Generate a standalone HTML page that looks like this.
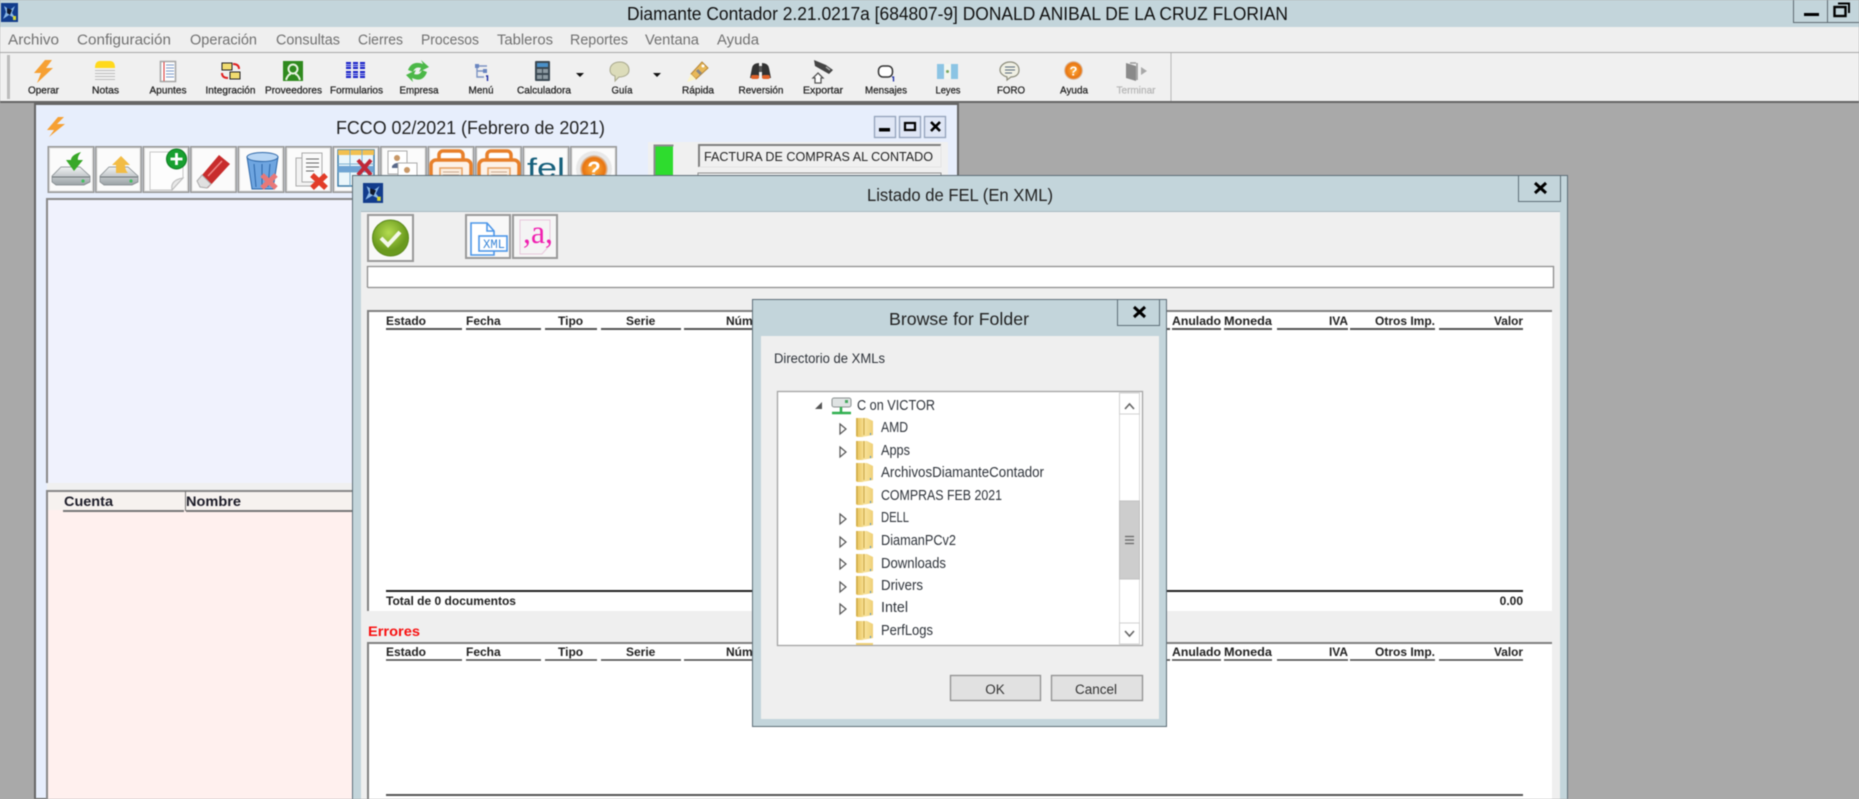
<!DOCTYPE html>
<html lang="es">
<head>
<meta charset="utf-8">
<title>Diamante Contador</title>
<style>
html,body{margin:0;padding:0;width:1859px;height:799px;overflow:hidden;background:#a9a9a9}
svg{display:block;filter:blur(.45px)}
text{font-family:"Liberation Sans",sans-serif}
.menu{font-size:15px;fill:#707070}
.tb{font-size:10.5px;fill:#222;text-anchor:middle;stroke:#222;stroke-width:.25}
.h{font-size:12px;font-weight:bold;fill:#222}
.tree{font-size:14.5px;fill:#2e333a}
</style>
</head>
<body>
<svg width="1859" height="799" viewBox="0 0 1859 799" xmlns="http://www.w3.org/2000/svg">
<defs>
<linearGradient id="fg" x1="0" x2="1" y1="0" y2="0"><stop offset="0" stop-color="#e6c055"/><stop offset=".5" stop-color="#f8e29a"/><stop offset="1" stop-color="#efd077"/></linearGradient>
<linearGradient id="disk" x1="0" x2="0" y1="0" y2="1"><stop offset="0" stop-color="#f0f2f3"/><stop offset="1" stop-color="#9aa2a6"/></linearGradient>
<radialGradient id="oball"><stop offset="0" stop-color="#ffb040"/><stop offset=".8" stop-color="#e8740f"/><stop offset="1" stop-color="#d8d8d8"/></radialGradient>
<radialGradient id="gball" cx=".45" cy=".35"><stop offset="0" stop-color="#b4dc50"/><stop offset="1" stop-color="#6a9a1e"/></radialGradient>
<g id="fld"><path d="M0 -9 H11 L17 -6 V8 L6 10 H1 L0 9Z" fill="url(#fg)"/><path d="M1 -9 V9 M8 -9 V8" stroke="#c9a544" stroke-width="1" fill="none"/><path d="M14 6h1v2h-1z" fill="#4a8fd0"/></g>
<path id="tri" d="M0 -5 L6 0 L0 5Z" fill="#fff" stroke="#555" stroke-width="1.2"/>
<g id="dsk"><path d="M4 30 L13 21 H32 L42 30 V36 L36 39 H8 L4 36Z" fill="url(#disk)" stroke="#7b8286" stroke-width=".7"/><path d="M4 31 L42 31" stroke="#6c7478" stroke-width="1"/><circle cx="35" cy="35" r="1.600" fill="#42c060"/></g>
<g id="prn"><rect x="11" y="5" width="24" height="14" rx="4" fill="#fff" stroke="#e8802a" stroke-width="3.500"/><rect x="3" y="14" width="40" height="19" rx="5" fill="#fdf2e8" stroke="#e8802a" stroke-width="3.500"/><rect x="12" y="22" width="22" height="20" fill="#fbeee0" stroke="#e8a060" stroke-width="1.500"/><path d="M15 26h16M15 29h16" stroke="#c8a890"/></g>
<g id="bt"><rect x="1" y="1" width="45" height="45" fill="#fff" stroke="#999" stroke-width="2"/><rect x="2" y="2" width="43" height="43" fill="#fbfbfb" stroke="#dcdcdc" stroke-width="1"/></g>
<g id="lg"><rect width="17" height="19" fill="#123c8c"/><path d="M3 3 L9 7 L14 3 L11 10 L15 16 L8 12 L2 16 L5 9Z" fill="#8ab8e8"/><path d="M6 5 L11 7 L9 12 L6 10Z" fill="#10182c"/><path d="M12 13h3v4h-3z" fill="#d8d838"/></g>
</defs>

<!-- App frame -->
<rect width="1859" height="799" fill="#a9a9a9"/>
<rect width="1859" height="27" fill="#c3d5db"/>
<use href="#lg" x="1" y="3"/>
<text x="627" y="20" font-size="18" fill="#111" textLength="661" lengthAdjust="spacingAndGlyphs">Diamante Contador 2.21.0217a [684807-9] DONALD ANIBAL DE LA CRUZ FLORIAN</text>
<path d="M1793.500 0V22.500H1859M1827.500 0V22.500" fill="none" stroke="#5f6b72" stroke-width="1"/>
<rect x="1804" y="13" width="15" height="3" fill="#000"/>
<rect x="1834.500" y="7" width="11" height="9" fill="none" stroke="#000" stroke-width="2.400"/>
<path d="M1838 3.500H1849V13" fill="none" stroke="#000" stroke-width="2"/>

<rect y="27" width="1859" height="25" fill="#efefef"/>
<text class="menu" x="8" y="44.500" textLength="51" lengthAdjust="spacingAndGlyphs">Archivo</text>
<text class="menu" x="77" y="44.500" textLength="94" lengthAdjust="spacingAndGlyphs">Configuración</text>
<text class="menu" x="190" y="44.500" textLength="67" lengthAdjust="spacingAndGlyphs">Operación</text>
<text class="menu" x="276" y="44.500" textLength="64" lengthAdjust="spacingAndGlyphs">Consultas</text>
<text class="menu" x="358" y="44.500" textLength="45" lengthAdjust="spacingAndGlyphs">Cierres</text>
<text class="menu" x="421" y="44.500" textLength="58" lengthAdjust="spacingAndGlyphs">Procesos</text>
<text class="menu" x="497" y="44.500" textLength="56" lengthAdjust="spacingAndGlyphs">Tableros</text>
<text class="menu" x="570" y="44.500" textLength="58" lengthAdjust="spacingAndGlyphs">Reportes</text>
<text class="menu" x="645" y="44.500" textLength="54" lengthAdjust="spacingAndGlyphs">Ventana</text>
<text class="menu" x="717" y="44.500" textLength="42" lengthAdjust="spacingAndGlyphs">Ayuda</text>
<rect y="52" width="1859" height="1" fill="#a8a8a8"/>

<!-- Toolbar -->
<rect y="53" width="1859" height="48" fill="#f0f0f0"/>
<rect y="101" width="1859" height="2" fill="#666"/>
<rect x="7" y="55" width="3" height="44" fill="#bcbcbc"/>
<rect x="1170.500" y="53" width="1" height="48" fill="#b8b8b8"/>

<text class="tb" x="43.500" y="93.500" textLength="31" lengthAdjust="spacingAndGlyphs">Operar</text>
<text class="tb" x="105.500" y="93.500" textLength="27" lengthAdjust="spacingAndGlyphs">Notas</text>
<text class="tb" x="168" y="93.500" textLength="37" lengthAdjust="spacingAndGlyphs">Apuntes</text>
<text class="tb" x="230.500" y="93.500" textLength="50" lengthAdjust="spacingAndGlyphs">Integración</text>
<text class="tb" x="293.500" y="93.500" textLength="57" lengthAdjust="spacingAndGlyphs">Proveedores</text>
<text class="tb" x="356.500" y="93.500" textLength="53" lengthAdjust="spacingAndGlyphs">Formularios</text>
<text class="tb" x="419" y="93.500" textLength="39" lengthAdjust="spacingAndGlyphs">Empresa</text>
<text class="tb" x="481" y="93.500" textLength="25" lengthAdjust="spacingAndGlyphs">Menú</text>
<text class="tb" x="544" y="93.500" textLength="54" lengthAdjust="spacingAndGlyphs">Calculadora</text>
<text class="tb" x="622" y="93.500" textLength="21" lengthAdjust="spacingAndGlyphs">Guía</text>
<text class="tb" x="698" y="93.500" textLength="32" lengthAdjust="spacingAndGlyphs">Rápida</text>
<text class="tb" x="761" y="93.500" textLength="45" lengthAdjust="spacingAndGlyphs">Reversión</text>
<text class="tb" x="823" y="93.500" textLength="40" lengthAdjust="spacingAndGlyphs">Exportar</text>
<text class="tb" x="886" y="93.500" textLength="42" lengthAdjust="spacingAndGlyphs">Mensajes</text>
<text class="tb" x="948" y="93.500" textLength="25" lengthAdjust="spacingAndGlyphs">Leyes</text>
<text class="tb" x="1011" y="93.500" textLength="28" lengthAdjust="spacingAndGlyphs">FORO</text>
<text class="tb" x="1074" y="93.500" textLength="28" lengthAdjust="spacingAndGlyphs">Ayuda</text>
<text class="tb" x="1136" y="93.500" textLength="39" lengthAdjust="spacingAndGlyphs" style="fill:#b5b5b5;stroke:#b5b5b5">Terminar</text>

<!-- Operar -->
<path d="M45 60 L34 73 H41 L37 83 L53 68 H46 L52 60Z" fill="#f6a033"/>
<!-- Notas -->
<path d="M95 68 Q95 61 100 61 H110 Q115 61 115 68Z" fill="#ffd91c"/><path d="M95 70.500H115M95 73.500H115M95 76.500H115M95 79.500H115" stroke="#bdbdbd"/>
<!-- Apuntes -->
<rect x="160.500" y="61.500" width="15" height="20" fill="#fff" stroke="#a8a8a8" stroke-width="1.600"/><path d="M164 62V81" stroke="#d83030"/><path d="M166 65h8M166 68h8M166 71h8M166 74h8M166 77h8" stroke="#7a9ac8"/>
<!-- Integracion -->
<rect x="222" y="63" width="10" height="7" fill="#f0dc70" stroke="#222"/><rect x="230" y="72" width="10" height="7" fill="#f0dc70" stroke="#222"/><path d="M233 64 Q239 64 239 69M228 78 Q222 78 222 73" fill="none" stroke="#e02020" stroke-width="2"/>
<!-- Proveedores -->
<rect x="283" y="61" width="20" height="20" fill="#2f8a1e"/><circle cx="293" cy="69" r="4.500" fill="none" stroke="#e8f4e0" stroke-width="2"/><path d="M286 80 Q288 74 291 74M300 80 Q298 74 295 74" fill="none" stroke="#e8f4e0" stroke-width="2"/>
<!-- Formularios -->
<g fill="#1a22c8"><rect x="346" y="62" width="5" height="7"/><rect x="353" y="62" width="5" height="7"/><rect x="360" y="62" width="5" height="7"/><rect x="346" y="71" width="5" height="7"/><rect x="353" y="71" width="5" height="7"/><rect x="360" y="71" width="5" height="7"/></g>
<path d="M346 64.500h19M346 66.500h19M346 73.500h19M346 75.500h19" stroke="#dfe4f8" stroke-width=".8"/>
<!-- Empresa -->
<path d="M408 70 Q412 60 423 64 L421 60 L429 67 L419 72 L421 68 Q415 66 413 72Z" fill="#4cb848"/><path d="M427 72 Q423 83 412 78 L413 82 L406 75 L416 70 L414 74 Q420 76 422 70Z" fill="#4cb848"/>
<!-- Menu -->
<path d="M477 66V77H484M477 71H484M477 66H487" fill="none" stroke="#7c94c4" stroke-width="1.400"/><rect x="475" y="64" width="4" height="4" fill="#6a86c0"/><rect x="483" y="69" width="4" height="4" fill="#6a86c0"/><path d="M486 76h1.500v5" stroke="#1a2aa0" stroke-width="1.400" fill="none"/>
<!-- Calculadora -->
<rect x="535" y="61" width="15" height="20" rx="1" fill="#3a4852"/><rect x="537" y="63" width="11" height="4" fill="#4a90c8"/><g fill="#8d9aa2"><rect x="537" y="69" width="5" height="4"/><rect x="543" y="69" width="5" height="4"/><rect x="537" y="75" width="5" height="4"/><rect x="543" y="75" width="5" height="4"/></g>
<path d="M576 73H584L580 77Z" fill="#111"/>
<!-- Guia -->
<path d="M620 62 C626 62 629 66 629 70 C629 75 624 77 619 77 L615 81 L615 76 C611 75 610 72 610 70 C610 65 614 62 620 62Z" fill="#dcdcba" stroke="#a8a88c"/>
<path d="M653 73H661L657 77Z" fill="#111"/>
<!-- Rapida -->
<path d="M691 74 L702 62 L708 68 L696 79Z" fill="#e8b858" stroke="#b88838"/><path d="M687 82 L691 74 L696 79Z" fill="#fbf4c8"/><path d="M697 70l4 4" stroke="#888" stroke-width="3"/><circle cx="703" cy="66" r="1.500" fill="#fff"/>
<!-- Reversion -->
<path d="M752 68 Q753 63 759 63 V78 H750Z M769 68 Q768 63 762 63 V78 H771Z" fill="#333"/><rect x="759" y="66" width="3" height="6" fill="#555"/><rect x="751" y="75" width="8" height="4" rx="2" fill="#e0622a"/><rect x="762" y="75" width="8" height="4" rx="2" fill="#e0622a"/>
<!-- Exportar -->
<path d="M814 60 L826 65 L833 70 L829 74 L815 66Z" fill="#444"/><path d="M826 67l4 3" stroke="#aaa" stroke-width="1.500"/><path d="M818 73 L823 78 H821 V83 H815 V78 H813Z" fill="#fff" stroke="#555" stroke-width="1.300"/>
<!-- Mensajes -->
<rect x="878.500" y="66" width="14" height="11" rx="4.500" fill="#fff" stroke="#333" stroke-width="1.500"/><path d="M892 77h1.500v4.500" stroke="#1a2aa0" stroke-width="1.300" fill="none"/>
<!-- Leyes -->
<rect x="937" y="64" width="7" height="15" fill="#8cc4e4"/><rect x="944" y="64" width="7" height="15" fill="#f2f6f0"/><rect x="951" y="64" width="7" height="15" fill="#8cc4e4"/><circle cx="947.500" cy="71.500" r="1.500" fill="#7aa860"/>
<!-- Foro -->
<path d="M1010 62 C1016 62 1019 66 1019 70 C1019 75 1015 77 1011 77 L1007 80 V77 C1003 76 1000 73 1000 70 C1000 66 1004 62 1010 62Z" fill="#f0f0e4" stroke="#8c8c7c" stroke-width="1.200"/><path d="M1005 67h10M1005 70h10M1005 73h7" stroke="#58687c"/>
<!-- Ayuda -->
<circle cx="1073.500" cy="70.500" r="9.500" fill="url(#oball)"/><text x="1073.500" y="75.500" font-size="13" font-weight="bold" fill="#fff" text-anchor="middle">?</text>
<!-- Terminar -->
<path d="M1126 63 L1136 66 V81 L1126 78Z" fill="#8a8a8a"/><path d="M1136 63H1130M1137 63V80" stroke="#9a9a9a" stroke-width="1.600"/><path d="M1147 71 L1141 67 V75Z" fill="#a8a8a8"/>

<!-- FCCO window -->
<rect x="35" y="104" width="923" height="695" fill="#e7eefc" stroke="#666" stroke-width="2"/>
<path d="M58 117 L47 130 H54 L49 137 L65 124 H57 L64 117Z" fill="#f6a033"/>
<text x="336" y="134" font-size="18" fill="#222" textLength="269" lengthAdjust="spacingAndGlyphs">FCCO 02/2021 (Febrero de 2021)</text>
<g fill="#dfe6f5" stroke="#93a2ba" stroke-width="1.300"><rect x="874.500" y="116.500" width="21" height="21"/><rect x="899.500" y="116.500" width="21" height="21"/><rect x="924.500" y="116.500" width="21" height="21"/></g>
<rect x="879" y="128" width="11" height="3.500" fill="#000"/>
<rect x="905" y="123" width="10" height="7" fill="none" stroke="#000" stroke-width="2.200"/>
<path d="M931 122 L940 131 M940 122 L931 131" stroke="#000" stroke-width="2.600"/>

<rect x="648" y="142" width="300" height="35" fill="#f0f0f0"/>
<rect x="655" y="146" width="18" height="31" fill="#2edc2e"/>
<path d="M654.500 177V145.500H673.500" fill="none" stroke="#8c8c8c" stroke-width="2"/>
<rect x="699" y="145" width="242" height="22" fill="#f0f0f0"/>
<path d="M699 167V145H941" fill="none" stroke="#808080" stroke-width="2"/>
<path d="M699 167H941V145" fill="none" stroke="#e4e4e4"/>
<rect x="698" y="173" width="243" height="4" fill="#f0f0f0" stroke="#8c8c8c"/>
<text x="704" y="161" font-size="13" fill="#222" textLength="229" lengthAdjust="spacingAndGlyphs">FACTURA DE COMPRAS AL CONTADO</text>

<!-- FCCO buttons -->
<use href="#bt" x="47.500" y="146"/><use href="#dsk" x="48" y="146"/><path d="M66 160 H71 Q71 155 81 152 Q77 157 78 160 H83 L74 171Z" fill="#38a828"/>
<use href="#bt" x="95" y="146"/><use href="#dsk" x="96" y="146"/><path d="M112 165 L121 156 L130 165 H125 Q125 170 128 173 H116 V165Z" fill="#f2bc45"/>
<use href="#bt" x="142.500" y="146"/><path d="M150 152 H183 V178 L172 190 H150Z" fill="#fdfdfd" stroke="#c8c8c8"/><path d="M172 190 Q170 180 183 178Z" fill="#e8e8e8" stroke="#bbb"/><circle cx="176.500" cy="159" r="10" fill="#18a030" stroke="#0c7a20"/><path d="M176.500 153V165M170.500 159H182.500" stroke="#fff" stroke-width="2.800"/>
<use href="#bt" x="190" y="146"/><path d="M197 181 L219 155 L230 164 L208 188 L200 187Z" fill="#c82c2c"/><path d="M197 181 L202 175 L211 184 L207 188 L200 187Z" fill="#e0e0e0" stroke="#aaa"/><path d="M208 176 L222 161" stroke="#e88" stroke-width="1.500"/>
<use href="#bt" x="237.500" y="146"/><path d="M247 157 H278 L273 189 H252Z" fill="#6ea5e0" stroke="#2c66a8"/><ellipse cx="262.500" cy="157" rx="15.500" ry="4.500" fill="#b8d6f4" stroke="#2c66a8"/><path d="M254 164 L256 187M262 164V187M270 164 L268 187" stroke="#2c66a8"/><path d="M262 175 L276 188 M276 175 L262 188" stroke="#e87878" stroke-width="5"/>
<use href="#bt" x="285" y="146"/><path d="M296 158 H316 V186 H296Z" fill="#f2f2f2" stroke="#aaa"/><path d="M302 153 H322 V182 H302Z" fill="#fafafa" stroke="#aaa"/><path d="M306 159h13M306 163h13M306 167h13M306 171h8" stroke="#666"/><path d="M312 175 L326 188 M326 175 L312 188" stroke="#e23c28" stroke-width="5.500"/>
<use href="#bt" x="332.500" y="146"/><rect x="338" y="150" width="36" height="36" fill="#eaf6fb" stroke="#3c7ca8" stroke-width="1.500"/><rect x="338" y="150" width="36" height="5" fill="#f2c050"/><path d="M338 164H374M338 172H374M350 150V186M362 150V186" stroke="#7db0d0"/><rect x="338" y="166" width="36" height="6" fill="#6fa4d4"/><path d="M358 160 L371 175 M371 160 L358 175" stroke="#c02838" stroke-width="4"/>
<use href="#bt" x="380" y="146"/><rect x="388" y="151" width="19" height="23" fill="#fff" stroke="#aaa"/><circle cx="397" cy="158" r="3" fill="#c89868"/><path d="M392 166 Q397 160 402 166V168H392Z" fill="#5a6a8a"/><rect x="398" y="163" width="19" height="23" fill="#fff" stroke="#aaa"/><circle cx="407" cy="170" r="3" fill="#c89868"/>
<use href="#bt" x="427.500" y="146"/><use href="#prn" x="428" y="146"/>
<use href="#bt" x="475" y="146"/><use href="#prn" x="476" y="146"/>
<use href="#bt" x="522.500" y="146"/><text x="546" y="177" font-size="27" fill="#17607c" text-anchor="middle" textLength="38" lengthAdjust="spacingAndGlyphs">fel</text>
<use href="#bt" x="570" y="146"/><circle cx="594" cy="169" r="18" fill="#e8e8e8"/><circle cx="594" cy="169" r="14" fill="url(#oball)"/><text x="594" y="177" font-size="22" font-weight="bold" fill="#fff" text-anchor="middle">?</text>

<!-- FCCO panels -->
<rect x="47" y="199" width="310" height="284" fill="#f0f2fd"/>
<path d="M47 483V199H357" fill="none" stroke="#888" stroke-width="2"/>
<rect x="47" y="483" width="310" height="7" fill="#f0f0f0"/>
<rect x="47" y="491" width="310" height="310" fill="#fff0ee"/>
<path d="M47 800V491H357" fill="none" stroke="#888" stroke-width="2"/>
<rect x="48" y="492" width="305" height="18" fill="#f6f2ef"/>
<rect x="63" y="510" width="121" height="2" fill="#777"/>
<rect x="186" y="510" width="170" height="2" fill="#777"/>
<rect x="185" y="491" width="1" height="20" fill="#777"/>
<text x="64" y="506" font-size="14" font-weight="bold" fill="#1c1c28" textLength="49" lengthAdjust="spacingAndGlyphs">Cuenta</text>
<text x="186" y="506" font-size="14" font-weight="bold" fill="#1c1c28" textLength="55" lengthAdjust="spacingAndGlyphs">Nombre</text>

<!-- Listado window -->
<rect x="352.500" y="175.500" width="1215" height="640" fill="#c3d5db" stroke="#5e6e78"/>
<rect x="361" y="212" width="1199" height="600" fill="#efefef"/>
<rect x="361" y="211" width="1199" height="1" fill="#a8bac2"/>
<use href="#lg" transform="translate(363 183) scale(1.180 1.050)"/>
<text x="867" y="201" font-size="17.500" fill="#222" textLength="186" lengthAdjust="spacingAndGlyphs">Listado de FEL (En XML)</text>
<rect x="1518.500" y="175.500" width="42" height="26" fill="#c3d5db" stroke="#5e6e78"/>
<path d="M1535 183 L1546 193 M1546 183 L1535 193" stroke="#000" stroke-width="3"/>

<rect x="368" y="215" width="45" height="46" fill="#f8f8f8" stroke="#999" stroke-width="2"/>
<circle cx="390.500" cy="238" r="18" fill="url(#gball)" stroke="#5c8a1c"/><path d="M381 238 L388 245 L400 232" fill="none" stroke="#f4f8ea" stroke-width="4"/>
<rect x="466" y="215" width="44" height="43" fill="#f8f8f8" stroke="#999" stroke-width="2"/>
<path d="M471 223 H487 L494 231 V255 H471Z" fill="#fff" stroke="#4c96e8" stroke-width="1.600"/><path d="M487 223V231H494" fill="none" stroke="#4c96e8" stroke-width="1.600"/><rect x="479" y="236" width="28" height="15" fill="#fff" stroke="#4c96e8" stroke-width="1.600"/>
<text x="494" y="248" font-size="13" fill="#3a86d8" text-anchor="middle" textLength="22" lengthAdjust="spacingAndGlyphs" style="font-family:'Liberation Mono',monospace">XML</text>
<rect x="513" y="215" width="44" height="43" fill="#f6f6f6" stroke="#999" stroke-width="2"/>
<path d="M520 220 H550 V245 L542 254 H520Z" fill="#f4f4f4" stroke="#e8c8dc"/>
<text x="538" y="243" font-size="33" fill="#f020b0" text-anchor="middle" textLength="30" lengthAdjust="spacingAndGlyphs" style="font-family:'Liberation Serif',serif">,a,</text>

<rect x="367.500" y="266.500" width="1186" height="21" fill="#fff"/>
<path d="M367.500 287.500V266.500H1553.500V287.500H367.500" fill="none" stroke="#8c8c8c" stroke-width="1.300"/>

<!-- top table -->
<rect x="368" y="311" width="1184" height="300" fill="#fff"/>
<path d="M368 611V311H1552" fill="none" stroke="#808080" stroke-width="2"/>
<text class="h" x="386" y="325">Estado</text>
<text class="h" x="466" y="325">Fecha</text>
<text class="h" x="558" y="325">Tipo</text>
<text class="h" x="626" y="325">Serie</text>
<text class="h" x="726" y="325">Número</text>
<text class="h" x="1172" y="325" textLength="49" lengthAdjust="spacingAndGlyphs">Anulado</text>
<text class="h" x="1224" y="325" textLength="48" lengthAdjust="spacingAndGlyphs">Moneda</text>
<text class="h" x="1329" y="325" textLength="19" lengthAdjust="spacingAndGlyphs">IVA</text>
<text class="h" x="1375" y="325" textLength="60" lengthAdjust="spacingAndGlyphs">Otros Imp.</text>
<text class="h" x="1494" y="325" textLength="29" lengthAdjust="spacingAndGlyphs">Valor</text>
<path d="M386 329H462M466 329H541M545 329H597M601 329H681M684 329H1170M1172 329H1221M1224 329H1272M1277 329H1348M1350 329H1435M1439 329H1523" stroke="#555" stroke-width="2"/>
<rect x="386" y="590" width="1137" height="2" fill="#222"/>
<text class="h" x="386" y="605" textLength="130" lengthAdjust="spacingAndGlyphs">Total de 0 documentos</text>
<text class="h" x="1523" y="605" text-anchor="end">0.00</text>

<text x="368" y="636" font-size="14" font-weight="bold" fill="#f81010" textLength="52" lengthAdjust="spacingAndGlyphs">Errores</text>

<!-- bottom table -->
<rect x="368" y="643" width="1184" height="160" fill="#fff"/>
<path d="M368 800V643H1552" fill="none" stroke="#808080" stroke-width="2"/>
<text class="h" x="386" y="656">Estado</text>
<text class="h" x="466" y="656">Fecha</text>
<text class="h" x="558" y="656">Tipo</text>
<text class="h" x="626" y="656">Serie</text>
<text class="h" x="726" y="656">Número</text>
<text class="h" x="1172" y="656" textLength="49" lengthAdjust="spacingAndGlyphs">Anulado</text>
<text class="h" x="1224" y="656" textLength="48" lengthAdjust="spacingAndGlyphs">Moneda</text>
<text class="h" x="1329" y="656" textLength="19" lengthAdjust="spacingAndGlyphs">IVA</text>
<text class="h" x="1375" y="656" textLength="60" lengthAdjust="spacingAndGlyphs">Otros Imp.</text>
<text class="h" x="1494" y="656" textLength="29" lengthAdjust="spacingAndGlyphs">Valor</text>
<path d="M386 660H462M466 660H541M545 660H597M601 660H681M684 660H1170M1172 660H1221M1224 660H1272M1277 660H1348M1350 660H1435M1439 660H1523" stroke="#444" stroke-width="1.500"/>
<rect x="386" y="794" width="1137" height="2" fill="#555"/>

<!-- Browse dialog -->
<rect x="752.500" y="299.500" width="414" height="427" fill="#c3d5db" stroke="#5e6e78"/>
<rect x="761" y="336" width="398" height="383" fill="#efefef"/>
<text x="889" y="325" font-size="17.500" fill="#222" textLength="140" lengthAdjust="spacingAndGlyphs">Browse for Folder</text>
<rect x="1117.500" y="299.500" width="42" height="26" fill="#c3d5db" stroke="#5e6e78"/>
<path d="M1134 307 L1145 317 M1145 307 L1134 317" stroke="#000" stroke-width="3"/>
<text x="774" y="363" font-size="13.500" fill="#2e333a" textLength="111" lengthAdjust="spacingAndGlyphs">Directorio de XMLs</text>

<rect x="777.500" y="391.500" width="365" height="254" fill="#fff" stroke="#a4a4a4" stroke-width="1.300"/>
<path d="M815 409 L822 402 V409Z" fill="#555"/>
<g><rect x="832" y="398" width="19" height="9" rx="2" fill="#dfe3e3" stroke="#8a9090"/><rect x="845" y="400" width="3" height="3" fill="#48a860"/><path d="M841 407V412M832 413H851" stroke="#30b050" stroke-width="2.500"/></g>
<text class="tree" x="857" y="410" textLength="78" lengthAdjust="spacingAndGlyphs">C on VICTOR</text>

<use href="#fld" x="856" y="427"/><use href="#fld" x="856" y="450"/><use href="#fld" x="856" y="472"/><use href="#fld" x="856" y="495"/><use href="#fld" x="856" y="517"/><use href="#fld" x="856" y="540"/><use href="#fld" x="856" y="563"/><use href="#fld" x="856" y="585"/><use href="#fld" x="856" y="607"/><use href="#fld" x="856" y="630"/>
<path d="M856 643H873V645H856Z" fill="#efd077"/>
<use href="#tri" x="840" y="429"/><use href="#tri" x="840" y="452"/><use href="#tri" x="840" y="519"/><use href="#tri" x="840" y="542"/><use href="#tri" x="840" y="564"/><use href="#tri" x="840" y="587"/><use href="#tri" x="840" y="609"/>

<text class="tree" x="881" y="432" textLength="27" lengthAdjust="spacingAndGlyphs">AMD</text>
<text class="tree" x="881" y="455" textLength="29" lengthAdjust="spacingAndGlyphs">Apps</text>
<text class="tree" x="881" y="477" textLength="163" lengthAdjust="spacingAndGlyphs">ArchivosDiamanteContador</text>
<text class="tree" x="881" y="500" textLength="121" lengthAdjust="spacingAndGlyphs">COMPRAS FEB 2021</text>
<text class="tree" x="881" y="522" textLength="28" lengthAdjust="spacingAndGlyphs">DELL</text>
<text class="tree" x="881" y="545" textLength="75" lengthAdjust="spacingAndGlyphs">DiamanPCv2</text>
<text class="tree" x="881" y="568" textLength="65" lengthAdjust="spacingAndGlyphs">Downloads</text>
<text class="tree" x="881" y="590" textLength="42" lengthAdjust="spacingAndGlyphs">Drivers</text>
<text class="tree" x="881" y="612" textLength="27" lengthAdjust="spacingAndGlyphs">Intel</text>
<text class="tree" x="881" y="635" textLength="52" lengthAdjust="spacingAndGlyphs">PerfLogs</text>

<!-- scrollbar -->
<rect x="1119.500" y="393" width="20" height="251" fill="#fff" stroke="#d8d8d8"/>
<rect x="1119.500" y="393" width="20" height="21" fill="#fff" stroke="#d0d0d0"/>
<rect x="1119.500" y="623" width="20" height="21" fill="#fff" stroke="#d0d0d0"/>
<rect x="1119.500" y="501" width="20" height="78" fill="#cdcdcd" stroke="#c0c0c0"/>
<path d="M1125 409 L1129.500 404 L1134 409M1125 631 L1129.500 636 L1134 631" fill="none" stroke="#666" stroke-width="1.600"/>
<path d="M1125 536.500h9M1125 540h9M1125 543.500h9" stroke="#666" stroke-width="1.300"/>

<rect x="950.500" y="675.500" width="90" height="25" fill="#e1e1e1" stroke="#8f8f8f" stroke-width="1.300"/>
<rect x="1051.500" y="675.500" width="91" height="25" fill="#e1e1e1" stroke="#8f8f8f" stroke-width="1.300"/>
<text x="995" y="694" font-size="13.500" fill="#333" text-anchor="middle">OK</text>
<text x="1096" y="694" font-size="13.500" fill="#333" text-anchor="middle">Cancel</text>
</svg>
</body>
</html>
